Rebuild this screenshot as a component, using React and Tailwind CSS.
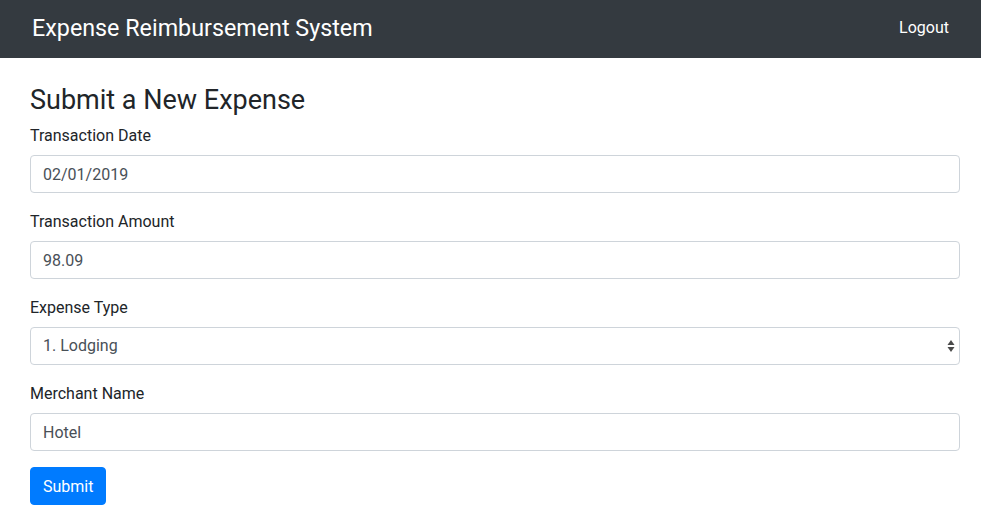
import React, { useState } from 'react';

const Field = ({ label, children }) => (
  <div className="mb-4">
    <label className="block pt-px mb-[7px] text-base leading-6 text-[#212529]">{label}</label>
    {children}
  </div>
);

const inputCls =
  'block w-full h-[38px] px-3 text-base text-[#495057] bg-white border border-[#ced4da] rounded-[4px] outline-none';

export default function App() {
  const [date, setDate] = useState('02/01/2019');
  const [amount, setAmount] = useState('98.09');
  const [type, setType] = useState('1');
  const [merchant, setMerchant] = useState('Hotel');

  return (
    <div className="min-h-[528px] bg-white font-['Roboto','Liberation_Sans',sans-serif]">
      {/* Navbar */}
      <nav className="h-[58px] bg-[#343a40] flex items-center justify-between pl-8 pr-8">
        <span className="text-[23.3px] text-white leading-none">Expense Reimbursement System</span>
        <a href="#" className="text-base text-white leading-none -mt-[2px]">Logout</a>
      </nav>

      <div className="pl-[30px] pr-[21px] pt-[28px] pb-6">
        <h4 className="text-[27px] leading-[29px] mb-2 text-[#212529]">Submit a New Expense</h4>

        <form onSubmit={(e) => e.preventDefault()}>
          <Field label="Transaction Date">
            <input className={inputCls} value={date} onChange={(e) => setDate(e.target.value)} />
          </Field>

          <Field label="Transaction Amount">
            <input className={inputCls} value={amount} onChange={(e) => setAmount(e.target.value)} />
          </Field>

          <Field label="Expense Type">
            <div className="relative">
              <select
                className={`${inputCls} appearance-none pr-8`}
                value={type}
                onChange={(e) => setType(e.target.value)}
              >
                <option value="1">1. Lodging</option>
                <option value="2">2. Travel</option>
                <option value="3">3. Food</option>
                <option value="4">4. Other</option>
              </select>
              <svg className="absolute right-[4px] top-1/2 -translate-y-1/2 pointer-events-none" width="10" height="14" viewBox="0 0 10 14">
                <path d="M5 1 L8.5 6 L1.5 6 Z" fill="#4a4a4a" />
                <path d="M5 13 L8.5 8 L1.5 8 Z" fill="#4a4a4a" />
              </svg>
            </div>
          </Field>

          <Field label="Merchant Name">
            <input className={inputCls} value={merchant} onChange={(e) => setMerchant(e.target.value)} />
          </Field>

          <button
            type="submit"
            className="h-[38px] px-3 pt-px text-base text-white bg-[#007bff] border border-[#007bff] rounded-[4px]"
          >
            Submit
          </button>
        </form>
      </div>
    </div>
  );
}
